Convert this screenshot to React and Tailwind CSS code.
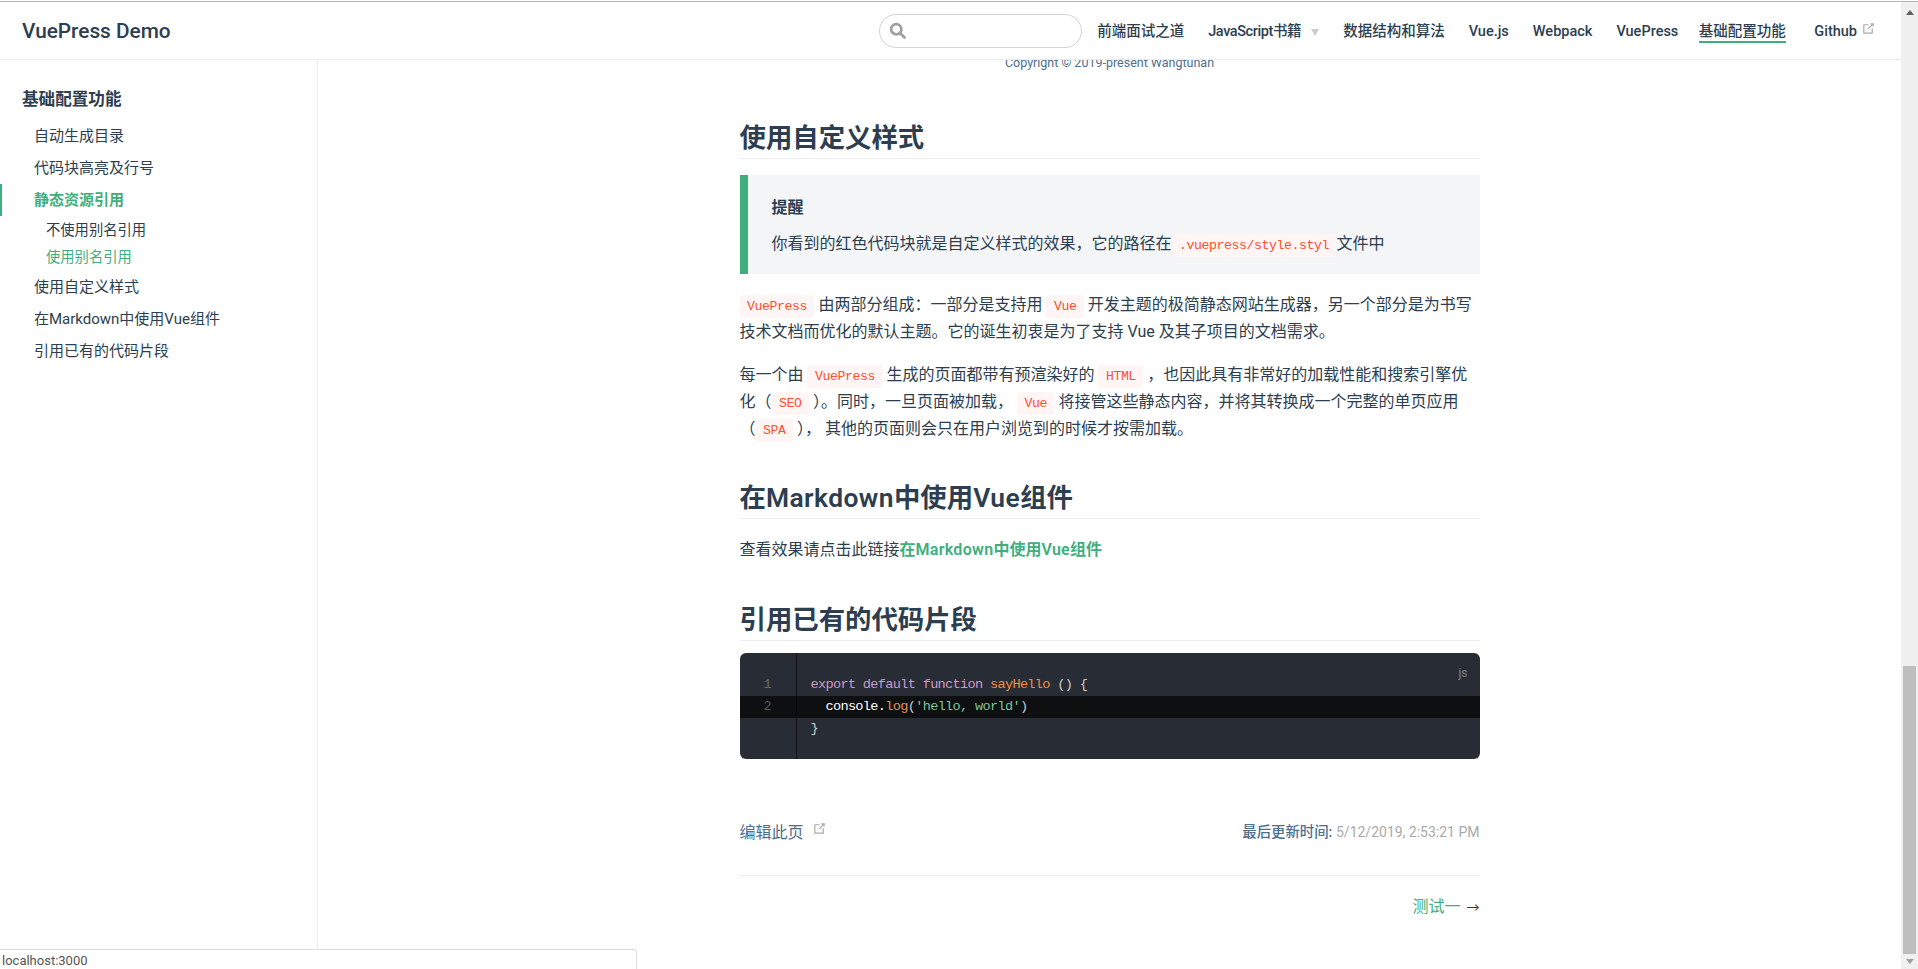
const sans = 'font-["Roboto","Noto_Sans_CJK_SC",sans-serif]';

function ExternalIcon({ className }) {
  return (
    <svg viewBox="0 0 100 100" className={className}>
      <path fill="currentColor" d="M18.8,85.1h56l0,0c2.2,0,4-1.8,4-4v-32h-8v28h-48v-48h28v-8h-32l0,0c-2.2,0-4,1.8-4,4v56C14.8,83.3,16.6,85.1,18.8,85.1z" />
      <polygon fill="currentColor" points="45.7,48.7 51.3,54.3 77.2,28.5 77.2,37.2 85.2,37.2 85.2,14.9 62.8,14.9 62.8,22.9 71.5,22.9" />
    </svg>
  );
}

function Chip({ children }) {
  return (
    <code className='rounded-[3px] bg-[#fff5f5] px-[7.5px] py-[4px] font-["Liberation_Mono",monospace] text-[13.2px] leading-none tracking-[-0.42px] text-[#ff502c]'>
      {children}
    </code>
  );
}

function Heading({ children, className }) {
  return (
    <h2 className={`border-b border-[#eaecef] pb-[3px] text-[26.4px] leading-[34px] font-semibold ${className}`}>
      {children}
    </h2>
  );
}

function Navbar() {
  const items = ['前端面试之道', 'JavaScript书籍', '数据结构和算法', 'Vue.js', 'Webpack', 'VuePress'];
  return (
    <header className="flex h-[58px] shrink-0 items-center justify-between border-b border-[#eaecef] pl-[22px] pr-[25px]">
      <div className="pt-[3px] text-[20.8px] font-medium text-[#2c3e50]">VuePress Demo</div>
      <nav className="flex items-center gap-[24px] text-[14.5px] font-medium text-[#2c3e50]">
        <div className="mr-[-9px] flex h-[34px] w-[203px] items-center rounded-[17px] border border-[#cfd4db] pl-[9px]">
          <svg viewBox="0 0 16 16" className="h-[17px] w-[17px] text-[#a0a0a0]" fill="none" stroke="currentColor" strokeWidth="2.6">
            <circle cx="6.8" cy="6.8" r="4.8" />
            <path d="M10.4 10.4 L14.6 14.6" strokeLinecap="round" />
          </svg>
        </div>
        {items.map((item) => (
          <a key={item} className="flex items-center pt-[2px] leading-[24px]">
            {item === 'JavaScript书籍' ? <span className="tracking-[-0.4px]">{item}</span> : item}
            {item === 'JavaScript书籍' && (
              <span className="ml-[10px] mt-[2px] h-0 w-0 border-x-[4.5px] border-t-[7px] border-x-transparent border-t-[#ccc]" />
            )}
          </a>
        ))}
        <a className="ml-[-3.5px] mt-[3px] border-b-2 border-[#3eaf7c] leading-[19px]">基础配置功能</a>
        <a className="ml-[4.5px] flex items-start pt-[2px] leading-[24px]">
          Github
          <ExternalIcon className="ml-[4px] mt-[1px] h-[15px] w-[15px] text-[#aaaaaa]" />
        </a>
      </nav>
    </header>
  );
}

function Sidebar() {
  return (
    <aside className="w-[318px] shrink-0 border-r border-[#eaecef] text-[#2c3e50]">
      <div className="pl-[22px] pt-[28px] text-[16.6px] leading-[24px] font-semibold">基础配置功能</div>
      <div className="mt-[8px] text-[15px] leading-[32px]">
        <div className="pl-[34px]">自动生成目录</div>
        <div className="pl-[34px]">代码块高亮及行号</div>
        <div className="border-l-[2px] border-[#3eaf7c] pl-[32px] font-semibold text-[#3eaf7c]">静态资源引用</div>
        <div className="pt-[1px] text-[14.3px] leading-[27px]">
          <div className="pl-[46px]">不使用别名引用</div>
          <div className="pl-[46px] text-[#3eaf7c]">使用别名引用</div>
        </div>
        <div className="pl-[34px]">使用自定义样式</div>
        <div className="pl-[34px]">在Markdown中使用Vue组件</div>
        <div className="pl-[34px]">引用已有的代码片段</div>
      </div>
    </aside>
  );
}

function CodeBlock() {
  return (
    <div className='relative mt-[12px] h-[106px] overflow-hidden rounded-[6px] bg-[#282c34] font-["Liberation_Mono",monospace] text-[13.6px] leading-[22px] tracking-[-0.68px]'>
      <span className='absolute right-[12px] top-[9px] font-["Roboto",sans-serif] text-[12px] tracking-normal text-white/40'>js</span>
      <div className="absolute bottom-0 left-[56px] top-0 w-px bg-black/60" />
      <div className="pt-[21px]">
        <div className="flex h-[22px]">
          <span className="w-[56px] pl-[24px] text-white/30">1</span>
          <span className="whitespace-pre pl-[15px] text-[#cccccc]">
            <span className="text-[#cc99cd]">export default function</span>{' '}
            <span className="text-[#f08d49]">sayHello</span> () {'{'}
          </span>
        </div>
        <div className="flex h-[22px] bg-[#0d0f11]">
          <span className="w-[56px] pl-[24px] text-white/30">2</span>
          <span className="whitespace-pre pl-[15px] text-white">
            {'  console.'}
            <span className="text-[#f08d49]">log</span>
            <span className="text-[#cccccc]">(</span>
            <span className="text-[#7ec699]">'hello, world'</span>
            <span className="text-[#cccccc]">)</span>
          </span>
        </div>
        <div className="flex h-[22px]">
          <span className="w-[56px]" />
          <span className="pl-[15px] text-[#cccccc]">{'}'}</span>
        </div>
      </div>
    </div>
  );
}

function Content() {
  return (
    <main className="flex-1 overflow-hidden text-[16px] text-[#2c3e50]">
      <div className="mx-auto w-[740px]">
        <div className="mt-[-7px] text-center text-[12.5px] leading-[20px] text-[#4e6e8e]">Copyright © 2019-present Wangtunan</div>

        <Heading className="mt-[48px]">使用自定义样式</Heading>

        <div className="mt-[16px] border-l-[8px] border-[#3eaf7c] bg-[#f3f5f7] pb-[17px] pl-[24px] pt-[22px]">
          <div className="font-semibold leading-[22px]">提醒</div>
          <p className="mt-[12px] leading-[26px]">
            你看到的红色代码块就是自定义样式的效果，它的路径在<Chip>.vuepress/style.styl</Chip>文件中
          </p>
        </div>

        <p className="mt-[17px] whitespace-nowrap leading-[27px]">
          <Chip>VuePress</Chip> 由两部分组成：一部分是支持用 <Chip>Vue</Chip> 开发主题的极简静态网站生成器，另一个部分是为书写
          <br />
          技术文档而优化的默认主题。它的诞生初衷是为了支持 Vue 及其子项目的文档需求。
        </p>

        <p className="mt-[16px] whitespace-nowrap leading-[27px]">
          每一个由 <Chip>VuePress</Chip> 生成的页面都带有预渲染好的 <Chip>HTML</Chip> ，也因此具有非常好的加载性能和搜索引擎优
          <br />
          化（<Chip>SEO</Chip> ）。同时，一旦页面被加载， <Chip>Vue</Chip> 将接管这些静态内容，并将其转换成一个完整的单页应用
          <br />
          （<Chip>SPA</Chip> ）， 其他的页面则会只在用户浏览到的时候才按需加载。
        </p>

        <Heading className="mt-[39px]">
          在<span className="tracking-[0.45px]">Markdown</span>中使用<span className="tracking-[0.45px]">Vue</span>组件
        </Heading>
        <p className="mt-[17px] leading-[27px]">
          查看效果请点击此链接
          <a className="font-semibold text-[#3eaf7c]">
            在<span className="tracking-[0.3px]">Markdown</span>中使用<span className="tracking-[0.3px]">Vue</span>组件
          </a>
        </p>

        <Heading className="mt-[40px]">引用已有的代码片段</Heading>
        <CodeBlock />

        <div className="mt-[61px] flex items-center justify-between leading-[24px]">
          <a className="flex items-start text-[#4e6e8e]">
            编辑此页
            <ExternalIcon className="ml-[8px] h-[15px] w-[15px] text-[#aaaaaa]" />
          </a>
          <div className="text-[14px]">
            <span className="text-[14.4px] font-medium text-[#4e6e8e]">最后更新时间: </span>
            <span className="text-[#aaaaaa]">5/12/2019, 2:53:21 PM</span>
          </div>
        </div>

        <div className="mt-[30px] border-t border-[#eaecef] pt-[19px] text-right leading-[24px]">
          <a className="mr-[2px] text-[#3eaf7c]">测试一</a> <span className="text-[13px]">→</span>
        </div>
      </div>
    </main>
  );
}

function Scrollbar() {
  return (
    <div className="flex w-[17px] shrink-0 flex-col items-center bg-[#f0f0f0]">
      <div className="mt-[8px] h-0 w-0 border-x-[4px] border-b-[5px] border-x-transparent border-b-[#606060]" />
      <div className="mt-[651px] h-[288px] w-[13px] bg-[#bebebe]" />
      <div className="mt-[5px] h-0 w-0 border-x-[4px] border-t-[5px] border-x-transparent border-t-[#a0a0a0]" />
    </div>
  );
}

export default function App() {
  return (
    <div className={`relative h-[969px] overflow-hidden bg-white ${sans}`}>
      <div className="h-[2px] border-b border-[#b5b5b5]" />
      <div className="flex h-[967px]">
        <div className="flex min-w-0 flex-1 flex-col">
          <Navbar />
          <div className="flex flex-1 overflow-hidden">
            <Sidebar />
            <Content />
          </div>
        </div>
        <Scrollbar />
      </div>
      {/* link preview at the bottom of the window */}
      <div className="absolute bottom-0 left-0 h-[20px] w-[637px] rounded-tr-[4px] border-r border-t border-[#dddddd] bg-white pl-[2px] text-[13px] leading-[22px] text-[#555]">
        localhost:3000
      </div>
    </div>
  );
}
